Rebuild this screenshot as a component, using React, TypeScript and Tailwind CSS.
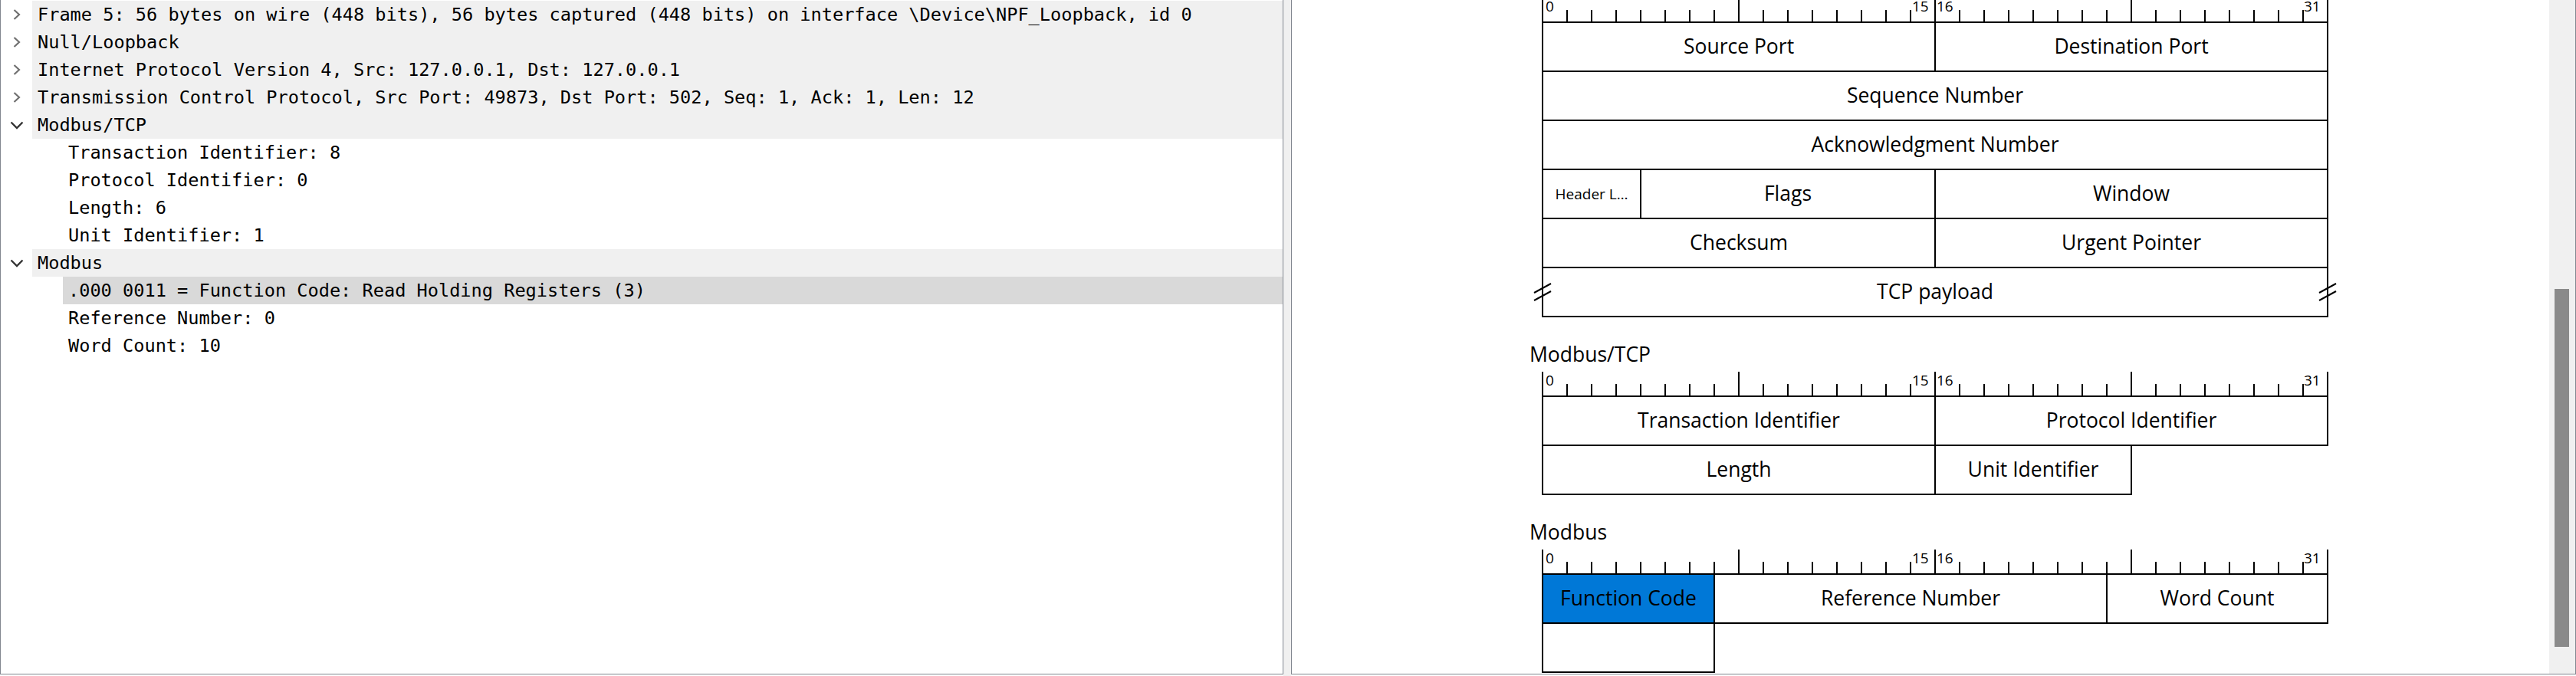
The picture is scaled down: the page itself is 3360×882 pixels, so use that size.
import React from 'react'

type TreeItem = {
  text: string
  level: 0 | 1
  state?: 'collapsed' | 'expanded'
  selected?: boolean
}

type Field = {
  label: string
  bits: number
  small?: boolean
  highlight?: boolean
  payload?: boolean
}

const tree: TreeItem[] = [
  { text: 'Frame 5: 56 bytes on wire (448 bits), 56 bytes captured (448 bits) on interface \\Device\\NPF_Loopback, id 0', level: 0, state: 'collapsed' },
  { text: 'Null/Loopback', level: 0, state: 'collapsed' },
  { text: 'Internet Protocol Version 4, Src: 127.0.0.1, Dst: 127.0.0.1', level: 0, state: 'collapsed' },
  { text: 'Transmission Control Protocol, Src Port: 49873, Dst Port: 502, Seq: 1, Ack: 1, Len: 12', level: 0, state: 'collapsed' },
  { text: 'Modbus/TCP', level: 0, state: 'expanded' },
  { text: 'Transaction Identifier: 8', level: 1 },
  { text: 'Protocol Identifier: 0', level: 1 },
  { text: 'Length: 6', level: 1 },
  { text: 'Unit Identifier: 1', level: 1 },
  { text: 'Modbus', level: 0, state: 'expanded' },
  { text: '.000 0011 = Function Code: Read Holding Registers (3)', level: 1, selected: true },
  { text: 'Reference Number: 0', level: 1 },
  { text: 'Word Count: 10', level: 1 },
]

const tcpFields: Field[] = [
  { label: 'Source Port', bits: 16 },
  { label: 'Destination Port', bits: 16 },
  { label: 'Sequence Number', bits: 32 },
  { label: 'Acknowledgment Number', bits: 32 },
  { label: 'Header L…', bits: 4, small: true },
  { label: 'Flags', bits: 12 },
  { label: 'Window', bits: 16 },
  { label: 'Checksum', bits: 16 },
  { label: 'Urgent Pointer', bits: 16 },
  { label: 'TCP payload', bits: 32, payload: true },
]

const mbtcpFields: Field[] = [
  { label: 'Transaction Identifier', bits: 16 },
  { label: 'Protocol Identifier', bits: 16 },
  { label: 'Length', bits: 16 },
  { label: 'Unit Identifier', bits: 8 },
]

const modbusFields: Field[] = [
  { label: 'Function Code', bits: 7, highlight: true },
  { label: 'Reference Number', bits: 16 },
  { label: 'Word Count', bits: 9 },
  { label: '', bits: 7 },
]

const spanClass: Record<number, string> = {
  4: 'col-span-4',
  7: 'col-span-7',
  8: 'col-span-8',
  9: 'col-span-9',
  12: 'col-span-12',
  16: 'col-span-16',
  32: 'col-span-32',
}

function Chevron({ state }: { state: 'collapsed' | 'expanded' }) {
  if (state === 'collapsed') {
    return (
      <svg width="12" height="16" viewBox="0 0 12 16">
        <polyline points="2.5,2 9,8 2.5,14" fill="none" stroke="#707070" strokeWidth="2.2" />
      </svg>
    )
  }
  return (
    <svg width="20" height="12" viewBox="0 0 20 12">
      <polyline points="2.5,2.5 10,10 17.5,2.5" fill="none" stroke="#333333" strokeWidth="2.4" />
    </svg>
  )
}

function TreeRow({ item }: { item: TreeItem }) {
  const bg = item.selected ? 'bg-[#d9d9d9]' : item.level === 0 ? 'bg-[#f0f0f0]' : ''
  return (
    <div className="flex h-[36px]">
      <div className={item.level === 0 ? 'w-[41px] shrink-0 flex items-center justify-center' : 'w-[81px] shrink-0'}>
        {item.state && <Chevron state={item.state} />}
      </div>
      <div className={`flex-1 pl-[7px] leading-[36px] whitespace-nowrap text-black ${bg}`}>{item.text}</div>
    </div>
  )
}

function Ruler({ className = '' }: { className?: string }) {
  const ticks = Array.from({ length: 33 }, (_, k) => k)
  const labels = [
    { t: '0', x: 5 },
    { t: '15', x: 483 },
    { t: '16', x: 515 },
    { t: '31', x: 994 },
  ]
  return (
    <svg width={1026} height={32} className={`block -ml-px overflow-visible ${className}`}>
      {ticks.map((k) => (
        <rect key={k} x={32 * k} y={k % 8 === 0 ? 0 : 16} width={2} height={k % 8 === 0 ? 32 : 16} fill="#000" />
      ))}
      {labels.map((l) => (
        <text key={l.t} x={l.x} y={18} fontSize={19} fontFamily="'Open Sans', sans-serif" fill="#000">
          {l.t}
        </text>
      ))}
    </svg>
  )
}

function BreakMark() {
  return (
    <svg width="26" height="28" viewBox="0 0 26 28" className="absolute top-[18px] -left-[13px] overflow-visible">
      <line x1="2" y1="15" x2="24" y2="3" stroke="#000" strokeWidth="2" />
      <line x1="2" y1="25" x2="24" y2="13" stroke="#000" strokeWidth="2" />
    </svg>
  )
}

function FieldGrid({ fields }: { fields: Field[] }) {
  return (
    <div className="grid grid-cols-[repeat(32,32px)] auto-rows-[64px] w-[1024px]">
      {fields.map((f, i) => (
        <div
          key={i}
          className={`${spanClass[f.bits]} ${f.payload ? 'relative' : ''} ${f.highlight ? 'bg-[#0078d7]' : ''} flex items-center justify-center outline-2 outline-solid outline-black outline-offset-[-1px] whitespace-nowrap text-black ${f.small ? 'text-[19px]' : 'text-[26.5px]'}`}
        >
          {f.label}
          {f.payload && (
            <>
              <BreakMark />
              <div className="absolute top-0 right-0 w-0 h-full">
                <BreakMark />
              </div>
            </>
          )}
        </div>
      ))}
    </div>
  )
}

function SectionLabel({ children }: { children: React.ReactNode }) {
  return <div className="-ml-[17px] mt-[31px] mb-[5px] h-[36px] leading-[36px] text-[26.5px] text-black">{children}</div>
}

export default function App() {
  return (
    <div className="flex w-[3360px] h-[882px] bg-white overflow-hidden">
      <div className="w-[1674px] h-[880px] shrink-0 border-l border-r border-b border-[#828790] pt-px overflow-hidden font-['DejaVu_Sans_Mono',monospace] text-[23.6px]">
        {tree.map((item, i) => (
          <TreeRow key={i} item={item} />
        ))}
      </div>
      <div className="w-[10px] h-[882px] shrink-0 bg-[#f0f0f0]" />
      <div className="flex w-[1676px] h-[880px] shrink-0 border-l border-r border-b border-[#828790]">
        <div className="flex-1 overflow-hidden bg-white font-['Open_Sans',sans-serif]">
          <div className="ml-[327px] w-[1024px]">
            <Ruler className="-mt-[3px]" />
            <FieldGrid fields={tcpFields} />
            <SectionLabel>Modbus/TCP</SectionLabel>
            <Ruler />
            <FieldGrid fields={mbtcpFields} />
            <SectionLabel>Modbus</SectionLabel>
            <Ruler />
            <FieldGrid fields={modbusFields} />
          </div>
        </div>
        <div className="w-[34px] shrink-0 bg-[#f0f0f0] pl-[7px]">
          <div className="mt-[377px] h-[467px] w-[19px] bg-[#8a8a8a]" />
        </div>
      </div>
    </div>
  )
}
